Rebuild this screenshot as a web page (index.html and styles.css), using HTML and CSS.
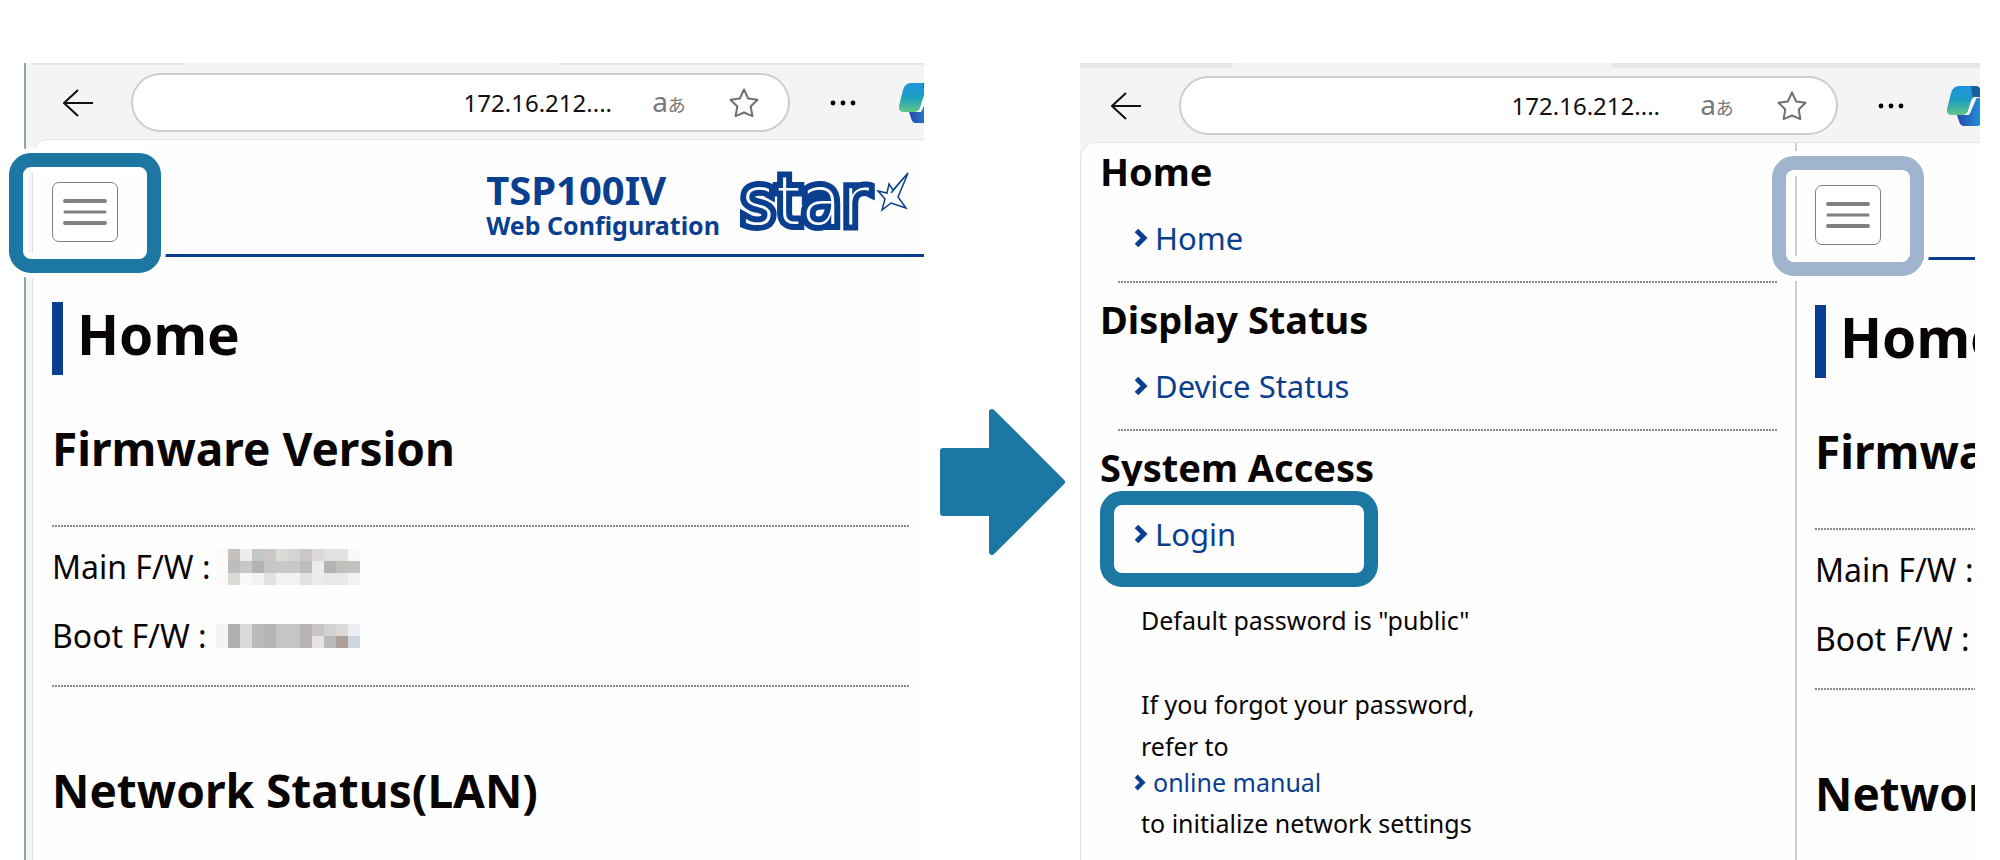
FILE: index.html
```html
<!DOCTYPE html>
<html lang="en">
<head>
    <meta charset="UTF-8">
    <meta name="viewport" content="width=device-width, initial-scale=1.0">
    <title>TSP100IV Web Configuration</title>
    <link rel="stylesheet" href="styles.css">
</head>
<body>
    <!-- shared icons -->
    <svg class="defs" width="0" height="0" aria-hidden="true">
        <defs>
            <linearGradient id="teal" x1="0" y1="0" x2="0" y2="1">
                <stop offset="0" stop-color="#1f95dc"/>
                <stop offset="0.5" stop-color="#1d9fc0"/>
                <stop offset="1" stop-color="#62c887"/>
            </linearGradient>
            <linearGradient id="blue" x1="0" y1="0" x2="1" y2="0">
                <stop offset="0" stop-color="#2748ad"/>
                <stop offset="1" stop-color="#1fb4ea"/>
            </linearGradient>
            <symbol id="back" viewBox="0 0 30 28">
                <path d="M30 14H1M15 1L1 14l14 13" fill="none" stroke="#111" stroke-width="2"/>
            </symbol>
            <symbol id="fav" viewBox="0 0 32 32">
                <path d="M16 2.500l4.200 9 9.300 1.200-6.800 6.800 1.700 9.700L16 25.500l-8.400 3.700 1.700-9.700-6.800-6.800 9.300-1.200z" fill="none" stroke="#707070" stroke-width="2" stroke-linejoin="round"/>
            </symbol>
            <symbol id="dots" viewBox="0 0 26 6">
                <circle cx="3" cy="3" r="2.400"/><circle cx="13" cy="3" r="2.400"/><circle cx="23" cy="3" r="2.400"/>
            </symbol>
            <symbol id="copilot" viewBox="0 0 48 40">
                <path d="M10 29h12l5-17h18L36 36q-2 4-6 4H17q-4 0-5-5z" fill="url(#blue)"/>
                <path d="M12 0h16q4 0 5 5l2 6h-6q-3 0-4 4l-3 10q-1 4-5 4H5q-6 0-5-6L4 7q2-7 8-7z" fill="url(#teal)"/>
                <path d="M24 0h5q4 0 5 5l2 6h-6q-2 0-4 3z" fill="#17609d"/>
                <path d="M30 11h-3q-2 1-3 4l-3 10q-1 3-5 4h3q4 0 5-4z" fill="#fff"/>
            </symbol>
            <symbol id="chevron" viewBox="0 0 14 20">
                <path d="M2.500 2.500L10 10l-7.500 7.500" fill="none" stroke="#0a3f8f" stroke-width="5"/>
            </symbol>
            <symbol id="bars" viewBox="0 0 44 28">
                <path d="M2 3h40M2 25h40" stroke="#808080" stroke-width="4" stroke-linecap="round"/>
                <path d="M2 14h40" stroke="#808080" stroke-width="3" stroke-linecap="round"/>
            </symbol>
        </defs>
    </svg>

    <main class="scene">
        <!-- menu closed -->
        <section class="window closed">
            <div class="tabs"><span></span><span></span></div>
            <div class="toolbar">
                <button class="icon" aria-label="Back"><svg width="30" height="28"><use href="#back"/></svg></button>
                <div class="address">
                    <input type="text" aria-label="Address" value="172.16.212....">
                    <button class="translate" aria-label="Translate">a<small>あ</small></button>
                    <button class="icon" aria-label="Favorite"><svg width="32" height="32"><use href="#fav"/></svg></button>
                </div>
                <div class="tools">
                    <button class="icon" aria-label="More"><svg width="26" height="6"><use href="#dots"/></svg></button>
                    <button class="icon" aria-label="Copilot"><svg width="48" height="40"><use href="#copilot"/></svg></button>
                </div>
            </div>
            <div class="page">
                <header class="header">
                    <div class="menu">
                        <button class="menu-btn" aria-label="Menu"><svg width="44" height="28"><use href="#bars"/></svg></button>
                        <span class="callout"></span>
                    </div>
                    <div class="brand">
                        <p class="model">TSP100IV</p>
                        <p class="sub">Web Configuration</p>
                    </div>
                    <svg class="logo" width="171" height="62" viewBox="0 0 171 62" role="img" aria-label="star">
                        <text class="logo-text" x="3" y="54">star</text>
                        <path d="M170 3l-15 17-4-6-2 9-9-2 7 8-3 11 9-7 15 5-8-11zM170 3l-17 20" fill="#fff" stroke="#0a3f8f" stroke-width="1.500"/>
                    </svg>
                </header>
                <div class="content">
                    <h1>Home</h1>
                    <h2>Firmware Version</h2>
                    <div class="rule"></div>
                    <div class="info">
                        <p><span>Main F/W :</span>
                            <svg class="mosaic" width="144" height="36" viewBox="0 0 12 3" shape-rendering="crispEdges" aria-hidden="true">
                                <path fill="#fbfaf9" d="M0 0h1v3h-1z"/>
                                <path fill="#c5c1be" d="M1 0h1v1h-1zM11 1h1v1h-1z"/>
                                <path fill="#ececea" d="M2 0h1v1h-1zM8 1h1v1h-1zM8 2h1v1h-1z"/>
                                <path fill="#c4c7c9" d="M3 0h1v1h-1zM4 1h1v1h-1z"/>
                                <path fill="#cbc7c7" d="M4 0h1v1h-1zM7 0h1v1h-1zM2 1h1v1h-1zM5 1h2v1h-2z"/>
                                <path fill="#dadad6" d="M5 0h1v1h-1zM1 2h1v1h-1z"/>
                                <path fill="#d2d5d4" d="M6 0h1v1h-1z"/>
                                <path fill="#dfd7da" d="M8 0h1v1h-1z"/>
                                <path fill="#e1e2e0" d="M9 0h2v1h-2zM4 2h1v1h-1zM7 2h1v1h-1z"/>
                                <path fill="#f8f9fb" d="M11 0h1v1h-1zM2 2h1v1h-1z"/>
                                <path fill="#bdbcbe" d="M1 1h1v1h-1zM7 1h1v1h-1z"/>
                                <path fill="#b3b3b3" d="M3 1h1v1h-1zM9 1h1v1h-1z"/>
                                <path fill="#c2c0ba" d="M10 1h1v1h-1z"/>
                                <path fill="#f2f2f2" d="M3 2h1v1h-1zM5 2h2v1h-2zM11 2h1v1h-1z"/>
                                <path fill="#e7e8ea" d="M9 2h2v1h-2z"/>
                            </svg>
                        </p>
                        <p><span>Boot F/W :</span>
                            <svg class="mosaic" width="144" height="24" viewBox="0 0 12 2" shape-rendering="crispEdges" aria-hidden="true">
                                <path fill="#f5f3ef" d="M0 0h1v2h-1z"/>
                                <path fill="#b0afb1" d="M1 0h1v2h-1z"/>
                                <path fill="#dcdad8" d="M2 0h1v2h-1zM10 0h1v1h-1z"/>
                                <path fill="#b9babb" d="M3 0h1v2h-1zM9 1h1v1h-1z"/>
                                <path fill="#b7b2b3" d="M4 0h1v2h-1zM7 0h1v2h-1z"/>
                                <path fill="#c7c5c4" d="M5 0h2v2h-2zM8 0h1v1h-1z"/>
                                <path fill="#d0d2d4" d="M9 0h1v1h-1z"/>
                                <path fill="#ecf0f4" d="M11 0h1v1h-1z"/>
                                <path fill="#e4e3e1" d="M8 1h1v1h-1z"/>
                                <path fill="#aba198" d="M10 1h1v1h-1z"/>
                                <path fill="#cfd6de" d="M11 1h1v1h-1z"/>
                            </svg>
                        </p>
                    </div>
                    <div class="rule"></div>
                    <h2 class="next">Network Status(LAN)</h2>
                </div>
            </div>
        </section>

        <svg class="arrow" width="126" height="146" viewBox="0 0 126 146" aria-hidden="true">
            <path d="M3 42h49V3L122 73 52 143V104H3z" fill="#1c77a3" stroke="#1c77a3" stroke-width="6" stroke-linejoin="round"/>
        </svg>

        <!-- menu open -->
        <section class="window opened">
            <div class="tabs"><span></span><span></span></div>
            <div class="toolbar">
                <button class="icon" aria-label="Back"><svg width="30" height="28"><use href="#back"/></svg></button>
                <div class="address">
                    <input type="text" aria-label="Address" value="172.16.212....">
                    <button class="translate" aria-label="Translate">a<small>あ</small></button>
                    <button class="icon" aria-label="Favorite"><svg width="32" height="32"><use href="#fav"/></svg></button>
                </div>
                <div class="tools">
                    <button class="icon" aria-label="More"><svg width="26" height="6"><use href="#dots"/></svg></button>
                    <button class="icon" aria-label="Copilot"><svg width="48" height="40"><use href="#copilot"/></svg></button>
                </div>
            </div>
            <div class="page split">
                <nav class="sidebar">
                    <h3>Home</h3>
                    <div class="item"><a href="#"><svg width="14" height="20"><use href="#chevron"/></svg>Home</a></div>
                    <div class="rule"></div>
                    <h3>Display Status</h3>
                    <div class="item"><a href="#"><svg width="14" height="20"><use href="#chevron"/></svg>Device Status</a></div>
                    <div class="rule"></div>
                    <h3>System Access</h3>
                    <div class="item">
                        <a href="#"><svg width="14" height="20"><use href="#chevron"/></svg>Login</a>
                        <span class="callout wide"></span>
                    </div>
                    <div class="note">
                        <p>Default password is "public"</p>
                        <p class="gap">If you forgot your password,<br>refer to</p>
                        <a href="#"><svg width="12" height="17"><use href="#chevron"/></svg>online manual</a>
                        <p>to initialize network settings</p>
                    </div>
                </nav>
                <div class="pane">
                    <header class="header">
                        <div class="menu">
                            <button class="menu-btn" aria-label="Menu"><svg width="44" height="28"><use href="#bars"/></svg></button>
                            <span class="callout pale"></span>
                        </div>
                    </header>
                    <div class="content">
                        <h1>Home</h1>
                        <h2>Firmware Version</h2>
                        <div class="rule"></div>
                        <div class="info">
                            <p>Main F/W :</p>
                            <p>Boot F/W :</p>
                        </div>
                        <div class="rule"></div>
                        <h2 class="next">Network Status(LAN)</h2>
                    </div>
                </div>
            </div>
        </section>
    </main>
</body>
</html>
```
FILE: styles.css
```css
*{
    box-sizing: border-box;
}
body{
    margin: 0;
    background: white;
    color: #0a0505;
    font-family: "Noto Sans", "Noto Sans CJK JP", sans-serif;
}
h1, h2, h3, p{
    margin: 0;
}
button{
    padding: 0;
    border: 0;
    background: none;
    font-family: inherit;
}
svg{
    display: block;
    flex: none;
}
a{
    color: #0a3f8f;
    text-decoration: none;
}
.defs{
    position: absolute;
}
.scene{
    display: grid;
    grid-template-columns: minmax(0, 1fr) 156px minmax(0, 1fr);
    min-height: 100vh;
    padding: 63px 20px 0 24px;
}
.arrow{
    margin: 346px 0 0 16px;
}

/* browser window */
.window{
    display: flex;
    flex-direction: column;
    background: #f4f4f4;
}
.closed{
    border-left: 2px solid #8ca2ae;
    padding-left: 6px;
}
.tabs{
    display: flex;
    justify-content: space-between;
    height: 5px;
}
.tabs span{
    width: 17%;
    background: #e6e6e6;
    border-radius: 0 0 6px 0;
}
.tabs span:last-child{
    width: 41%;
    border-radius: 0 0 0 6px;
}
.closed .tabs{
    height: 2px;
}
.toolbar{
    display: flex;
    align-items: center;
    padding: 8px 0 7px 31px;
}
.address{
    flex: 1;
    min-width: 0;
    display: flex;
    align-items: center;
    height: 59px;
    margin-left: 38px;
    padding-right: 28px;
    background: white;
    border: 2px solid #cdcdcd;
    border-radius: 30px;
}
.address input{
    flex: 1;
    min-width: 0;
    padding: 0;
    border: 0;
    outline: 0;
    background: none;
    color: #111;
    font: 24px "Noto Sans", sans-serif;
    text-align: right;
}
.translate{
    width: 34px;
    margin: 0 42px 0 40px;
    color: #777;
    font-size: 28px;
    line-height: 32px;
    white-space: nowrap;
}
.translate small{
    font-size: 18px;
}
.tools{
    display: flex;
    align-items: center;
    gap: 43px;
    width: 134px;
    padding-left: 40px;
    overflow: hidden;
}
.opened .tools{
    width: 142px;
}
.page{
    flex: 1;
    background: #fefefe;
    border-top: 1px solid #e6e6e6;
    border-left: 1px solid #e2e2e2;
    border-radius: 16px 0 0 0;
}
.closed .page{
    padding-left: 19px;
}

/* printer page */
.header{
    display: flex;
    align-items: flex-start;
    padding: 30px 15px 12px 0;
    border-bottom: 3px solid #0a3f8f;
}
.menu{
    position: relative;
    margin: 12px auto 0 0;
}
.menu-btn{
    display: flex;
    align-items: center;
    justify-content: center;
    width: 66px;
    height: 60px;
    background: white;
    border: 1px solid #808080;
    border-radius: 7px;
}
.brand{
    color: #0a3f8f;
    font-weight: bold;
}
.model{
    font-size: 40px;
    line-height: 40px;
}
.sub{
    font-size: 25px;
    line-height: 30px;
}
.logo{
    margin-left: 18px;
    overflow: visible;
}
.logo-text{
    font-family: "DejaVu Sans", sans-serif;
    font-size: 66px;
    font-weight: 200;
    fill: white;
    stroke: #0a3f8f;
    stroke-width: 12px;
    paint-order: stroke;
}
.content{
    padding: 45px 15px 0 0;
    white-space: nowrap;
}
h1{
    padding: 0 0 9px 14px;
    border-left: 11px solid #0a3f8f;
    font-size: 55px;
    line-height: 64px;
}
h2{
    margin: 43px 0 47px;
    font-size: 46px;
    line-height: 60px;
}
h2.next{
    margin: 73px 0 0;
}
.rule{
    height: 2px;
    background: repeating-linear-gradient(90deg, #8a8a8a 0 2px, transparent 2px 3px);
}
.info{
    padding: 5px 0 15px;
    font-size: 32px;
    line-height: 69px;
}
.info p{
    display: flex;
    align-items: center;
    height: 69px;
}
.info span{
    min-width: 164px;
}

/* side menu */
.split{
    display: flex;
}
.sidebar{
    flex: 1;
    min-width: 0;
    padding: 5px 18px 0 19px;
}
h3{
    font-size: 38px;
    line-height: 46px;
}
.item{
    position: relative;
    margin: 20px 0 19px 34px;
}
.item a{
    display: flex;
    align-items: center;
    gap: 7px;
    font-size: 31px;
    line-height: 48px;
}
.sidebar .rule{
    margin: 0 0 13px 18px;
}
.note{
    padding: 22px 0 0 41px;
    font-size: 25px;
    line-height: 42px;
}
.note .gap{
    margin-top: 42px;
}
.note a{
    display: flex;
    align-items: center;
    gap: 7px;
    margin: 0 0 5px -7px;
    line-height: 30px;
}
.pane{
    width: 185px;
    padding: 0 5px 0 18px;
    border-left: 2px solid #cfcfcf;
}
.pane .content{
    padding-right: 0;
    overflow: hidden;
}

/* highlight frames */
.callout{
    position: absolute;
    top: -29px;
    left: -43px;
    width: 152px;
    height: 120px;
    border: 14px solid #1c77a3;
    border-radius: 22px;
    box-shadow: 0 0 0 5px white, inset 0 0 0 6px white;
    pointer-events: none;
}
.callout.wide{
    top: -19px;
    left: -34px;
    width: 278px;
    height: 96px;
}
.callout.pale{
    border-color: #a0b4cd;
}
```
